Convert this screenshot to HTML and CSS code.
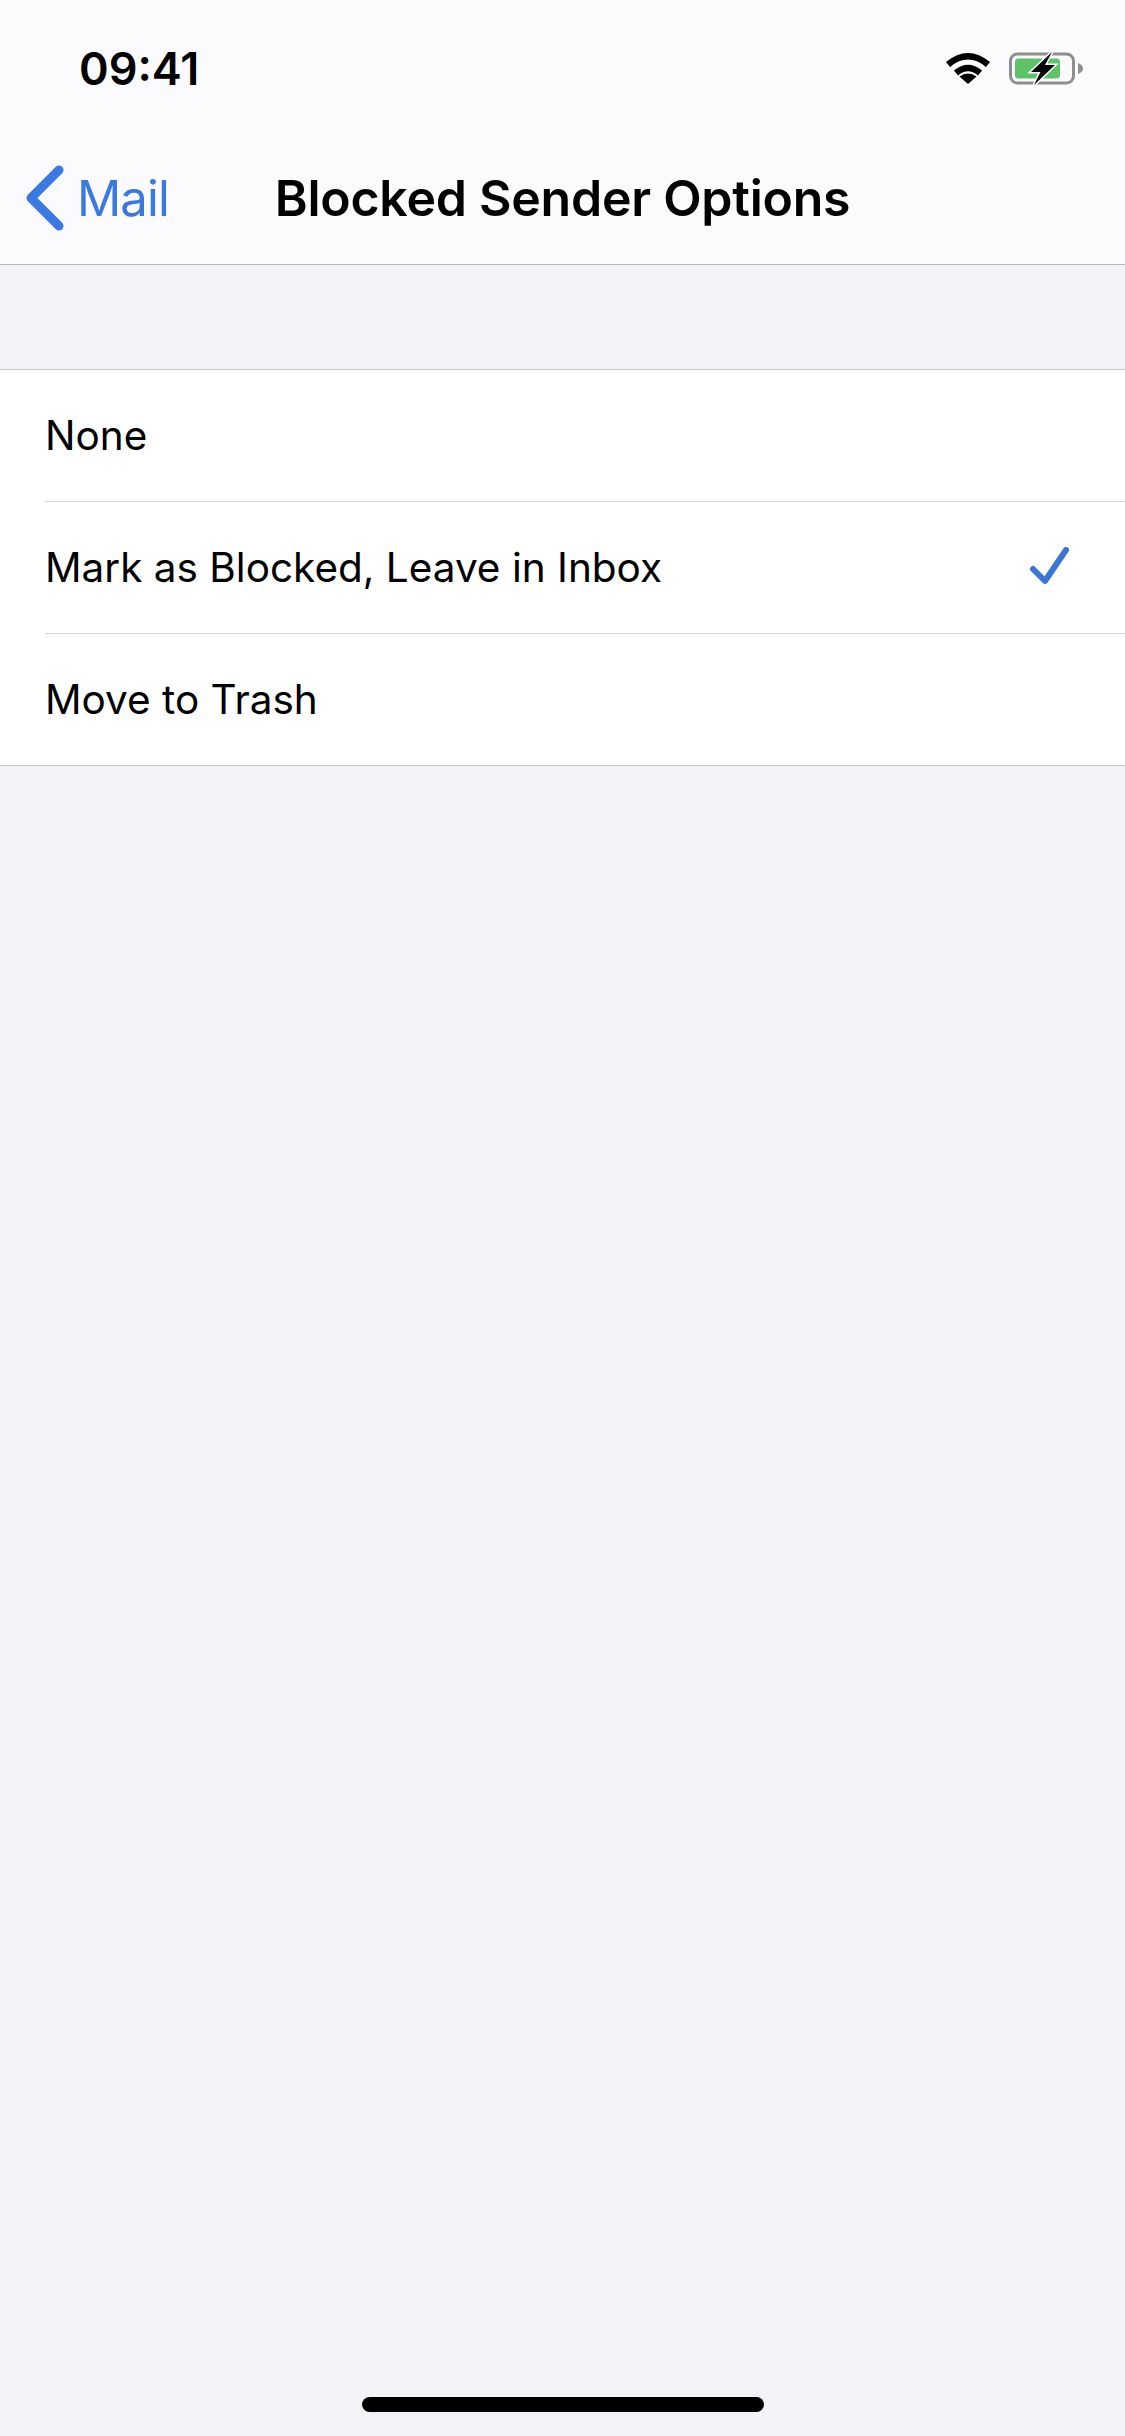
FILE: index.html
```html
<!DOCTYPE html>
<html lang="en">
<head>
<meta charset="utf-8">
<title>Blocked Sender Options</title>
<link rel="stylesheet" href="styles.css">
</head>
<body>
<div class="page">
  <header class="header">
    <div class="status">
      <span class="time">09:41</span>
      <div class="status-icons">
        <svg class="wifi" width="46" height="34" viewBox="0 0 46 34"><path d="M3 13.500Q23 -3 43 13.500" fill="none" stroke="#000" stroke-width="6.500"/><path d="M11 22Q23 12 35 22" fill="none" stroke="#000" stroke-width="6.500"/><path d="M23 33L14.500 25.500Q23 19.500 31.500 25.500Z" fill="#000"/></svg>
        <svg class="battery" width="74" height="34" viewBox="0 0 74 34"><rect x="1.500" y="3" width="63" height="29" rx="7" fill="none" stroke="#8e8e90" stroke-width="3"/><rect x="6" y="7.500" width="45" height="20" rx="3.500" fill="#5ec267"/><path d="M69 12C72 13 74 15 74 17.500S72 22 69 23Z" fill="#8e8e90"/><path class="bolt" d="M43 1L22 21H31.500L25 34L46 14H36Z"/></svg>
      </div>
    </div>
    <nav class="nav">
      <a class="back">
        <svg class="chevron" width="40" height="66" viewBox="0 0 40 66"><path d="M33 5L5 33L33 61" fill="none" stroke="#3a78e2" stroke-width="9" stroke-linecap="round" stroke-linejoin="round"/></svg>
        <span class="back-label">Mail</span>
      </a>
      <h1 class="title">Blocked Sender Options</h1>
      <span class="nav-end"></span>
    </nav>
  </header>
  <main class="content">
    <ul class="list">
      <li class="row"><span class="row-label">None</span></li>
      <li class="row"><span class="row-label">Mark as Blocked, Leave in Inbox</span>
        <svg class="check" width="42" height="42" viewBox="0 0 42 42"><path d="M4 22L16 34L37 3" fill="none" stroke="#3a75d8" stroke-width="6" stroke-linecap="round" stroke-linejoin="round"/></svg>
      </li>
      <li class="row"><span class="row-label">Move to Trash</span></li>
    </ul>
  </main>
  <div class="home-indicator"></div>
</div>
</body>
</html>
```
FILE: styles.css
```css
* { box-sizing: border-box; }
html, body { margin: 0; padding: 0; }
body { font-family: Inter, "Liberation Sans", sans-serif; color: #000; background: #f2f2f7; }
.page { width: 1125px; height: 2436px; display: flex; flex-direction: column; overflow: hidden; }
.header { height: 265px; background: #fbfbfd; border-bottom: 1px solid #b3b3b6; flex: none; }
.status { height: 132px; display: flex; align-items: center; justify-content: space-between; padding: 4px 42px 0 79px; }
.time { font-size: 45px; font-weight: 600; line-height: 1; }
.status-icons { display: flex; align-items: center; gap: 18px; }
.wifi, .battery { display: block; }
.bolt { fill: #000; stroke: #fbfbfd; stroke-width: 3px; paint-order: stroke; }
.nav { height: 132px; display: grid; grid-template-columns: 1fr auto 1fr; align-items: center; }
.back { display: flex; align-items: center; gap: 11px; padding-left: 26px; color: #3a78e2; }
.chevron { display: block; }
.back-label { font-size: 49px; line-height: 1; letter-spacing: -0.9px; }
.title { margin: 0; font-size: 50px; font-weight: 600; line-height: 1; letter-spacing: -0.25px; }
.content { padding-top: 104px; flex: 1; }
.list { list-style: none; margin: 0; padding: 0 0 0 45px; background: #fff; border-top: 1px solid #c8c8ca; border-bottom: 1px solid #c8c8ca; }
.row { height: 132px; display: flex; align-items: center; justify-content: space-between; padding-right: 54px; border-bottom: 1px solid #d2d2d4; }
.row:last-child { height: 131px; border-bottom: 0; }
.row-label { font-size: 40.5px; line-height: 1; padding-top: 2px; }
.check { display: block; }
.home-indicator { width: 402px; height: 15px; margin: 0 auto 24px; border-radius: 8px; background: #000; flex: none; }
```
